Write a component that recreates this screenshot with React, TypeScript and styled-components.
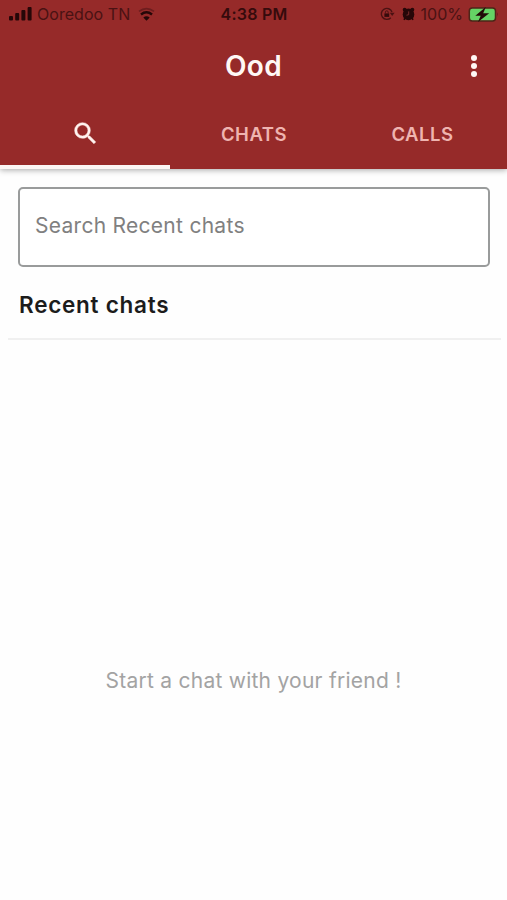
import React from "react";
import styled, { createGlobalStyle } from "styled-components";

const GlobalStyle = createGlobalStyle`
  * { box-sizing: border-box; }
  body { margin: 0; background: #fefefe; font-family: Inter, "Liberation Sans", sans-serif; }
`;

const Screen = styled.div`
  display: flex;
  flex-direction: column;
  width: 100%;
  height: 900px;
  overflow: hidden;
`;

const Header = styled.header`
  flex: none;
  height: 169px;
  display: flex;
  flex-direction: column;
  background: #962a29;
  box-shadow: 0 1px 6px rgba(0, 0, 0, 0.35);
`;

const StatusBar = styled.div`
  display: grid;
  grid-template-columns: 1fr auto 1fr;
  align-items: center;
  height: 28px;
  padding: 0 8px 0 9px;
  color: #350b0c;
  font-size: 16px;
  line-height: 20px;
  white-space: nowrap;
`;

const StatusGroup = styled.div<{ $end?: boolean }>`
  display: flex;
  align-items: center;
  justify-content: ${({ $end }) => ($end ? "flex-end" : "flex-start")};
`;

const StatusText = styled.span<{ $spacing: number }>`
  color: #4a1213;
  letter-spacing: ${({ $spacing }) => $spacing}px;
`;

const Carrier = styled(StatusText)`
  margin: 0 8px 0 5px;
`;

const Charge = styled(StatusText)`
  margin: 0 5px 0 6px;
`;

const Clock = styled.time`
  font-weight: 600;
  font-size: 16px;
  letter-spacing: 0.25px;
`;

const Icon = styled.svg`
  display: block;
  flex: none;
`;

const TitleBar = styled.div`
  display: grid;
  grid-template-columns: 1fr auto 1fr;
  align-items: center;
  height: 73px;
  padding: 2px 25px 0;
  color: #fff8f5;
`;

const Title = styled.h1`
  grid-column: 2;
  margin: 0;
  font-size: 28px;
  line-height: 34px;
  font-weight: 600;
  letter-spacing: 0.3px;
`;

const MenuButton = styled.button`
  justify-self: end;
  padding: 0;
  border: 0;
  background: none;
  color: inherit;
`;

const Tabs = styled.nav`
  flex: 1;
  display: grid;
  grid-template-columns: 170px 1fr 169px;
`;

const Tab = styled.button<{ $active?: boolean }>`
  display: flex;
  align-items: center;
  justify-content: center;
  padding: 1px 0 0;
  border: 0;
  border-bottom: 4px solid ${({ $active }) => ($active ? "#fbf5f4" : "transparent")};
  background: none;
  color: ${({ $active }) => ($active ? "#fff3ef" : "#efb4b0")};
  font: 600 18.5px/22px Inter, sans-serif;
  letter-spacing: 0.5px;
`;

const SearchField = styled.input`
  flex: none;
  height: 80px;
  margin: 18px 17px 0 18px;
  padding: 0 15px 4px;
  border: 2px solid #999b9b;
  border-radius: 5px;
  outline: 0;
  background: #fff;
  font: 400 21px/26px Inter, sans-serif;
  letter-spacing: 0.28px;
  &::placeholder { color: #808080; opacity: 1; }
`;

const SectionTitle = styled.h2`
  flex: none;
  height: 73px;
  margin: 0 6px 0 8px;
  padding: 24px 0 0 11px;
  border-bottom: 2px solid #f0f0f0;
  color: #1c1c1c;
  font-size: 22.5px;
  line-height: 28px;
  font-weight: 600;
  letter-spacing: 0.75px;
`;

const EmptyState = styled.main`
  flex: 1;
  display: flex;
  align-items: center;
  justify-content: center;
  color: #a3a3a3;
`;

const EmptyMessage = styled.p`
  margin: 122px 0 0;
  font-size: 21px;
  line-height: 26px;
  letter-spacing: 0.25px;
`;

const SignalIcon = () => (
  <Icon width="23" height="16" viewBox="0 0 23 16" fill="#260708">
    <rect x="0" y="10" width="4" height="4.5" rx="1" />
    <rect x="6.2" y="7" width="4" height="7.5" rx="1" />
    <rect x="12.4" y="4" width="4" height="10.5" rx="1" />
    <rect x="18.6" y="1" width="4" height="13.5" rx="1" />
  </Icon>
);

const WifiIcon = () => (
  <Icon width="17" height="14" viewBox="0 0 17 14" fill="none">
    <path d="M1 4.4Q8.5-1.2 16 4.4" stroke="#6d1d1e" strokeWidth="1.8" />
    <path d="M3 7.4Q8.5 3.2 14 7.4" stroke="#260708" strokeWidth="2.5" />
    <path d="M5.3 10.6Q8.5 7.8 11.7 10.6L8.5 13.8Z" fill="#260708" />
  </Icon>
);

const RotationLockIcon = () => (
  <Icon width="15" height="14" viewBox="0 0 15 14" fill="none" stroke="#4b1213" strokeWidth="1.4">
    <path d="M12 5A5.5 5.5 0 1 0 10.8 10.7" />
    <path d="M9.7 5.8H14.6L12.2 9Z" fill="#4b1213" stroke="none" />
    <rect x="4.4" y="6.4" width="4.8" height="3.5" fill="#350b0c" stroke="none" />
    <path d="M5.4 6.5V5.2a1.4 1.4 0 0 1 2.8 0V6.5" strokeWidth="1" />
  </Icon>
);

const AlarmIcon = () => (
  <Icon width="13" height="14" viewBox="0 0 13 14" fill="#260708">
    <circle cx="6.5" cy="7.4" r="5.8" />
    <circle cx="2.7" cy="2.8" r="2" />
    <circle cx="10.3" cy="2.8" r="2" />
    <path d="M3 11L2 12.8M10 11L11 12.8" stroke="#260708" strokeWidth="1.6" />
    <path d="M6.7 4.4V7.7L4.5 8.2" fill="none" stroke="#85302f" strokeWidth="0.9" />
  </Icon>
);

const AlarmSlot = styled.span`
  margin-left: 7px;
`;

const BatteryIcon = () => (
  <Icon width="31" height="17" viewBox="0 0 31 17">
    <rect x="1.3" y="1.9" width="26.2" height="13.2" rx="3" fill="#65d365" stroke="#4d2518" strokeWidth="1.5" />
    <path d="M29.2 6.2Q31 8.4 29.2 10.7Z" fill="#55181a" />
    <path d="M17.8 1L7.3 9.7H12.7L10 16L21.2 7.3H15.2Z" fill="#220a08" />
  </Icon>
);

const MoreIcon = () => (
  <Icon width="16" height="24" viewBox="0 0 16 24" fill="currentColor">
    <circle cx="8" cy="4" r="3" />
    <circle cx="8" cy="12" r="3" />
    <circle cx="8" cy="20" r="3" />
  </Icon>
);

const SearchIcon = () => (
  <Icon width="29" height="29" viewBox="0 0 24 24" fill="currentColor" stroke="currentColor" strokeWidth="0.4">
    <path d="M15.5 14h-.79l-.28-.27A6.471 6.471 0 0 0 16 9.5 6.5 6.5 0 1 0 9.5 16c1.61 0 3.09-.59 4.23-1.57l.27.28v.79l5 4.99L20.49 19l-4.99-5zm-6 0C7.01 14 5 11.99 5 9.5S7.01 5 9.5 5 14 7.01 14 9.5 11.99 14 9.5 14z" />
  </Icon>
);

export default function App() {
  return (
    <>
      <GlobalStyle />
      <Screen>
        <Header>
          <StatusBar>
            <StatusGroup>
              <SignalIcon />
              <Carrier $spacing={0.05}>Ooredoo TN</Carrier>
              <WifiIcon />
            </StatusGroup>
            <Clock>4:38 PM</Clock>
            <StatusGroup $end>
              <RotationLockIcon />
              <AlarmSlot><AlarmIcon /></AlarmSlot>
              <Charge $spacing={0}>100%</Charge>
              <BatteryIcon />
            </StatusGroup>
          </StatusBar>
          <TitleBar>
            <Title>Ood</Title>
            <MenuButton aria-label="Menu"><MoreIcon /></MenuButton>
          </TitleBar>
          <Tabs>
            <Tab $active aria-label="Search"><SearchIcon /></Tab>
            <Tab>CHATS</Tab>
            <Tab>CALLS</Tab>
          </Tabs>
        </Header>
        <SearchField placeholder="Search Recent chats" />
        <SectionTitle>Recent chats</SectionTitle>
        <EmptyState>
          <EmptyMessage>Start a chat with your friend !</EmptyMessage>
        </EmptyState>
      </Screen>
    </>
  );
}
